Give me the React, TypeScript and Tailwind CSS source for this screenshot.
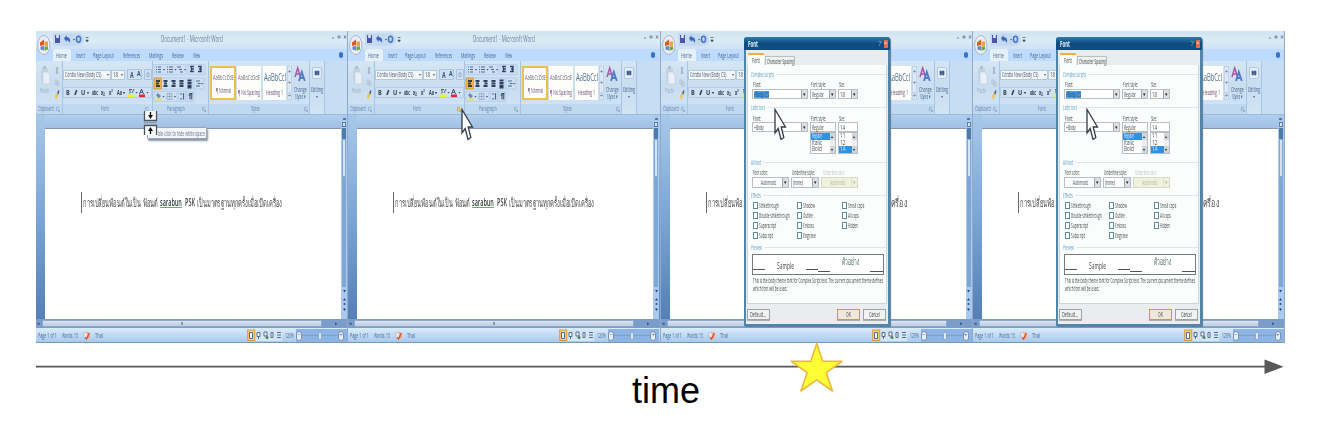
import { useLayoutEffect, useRef, useState, type ReactNode } from "react";

/* One line of text, condensed or widened to fill the width of its box. */
function Fit({ c, children }: { c: string; children: ReactNode }) {
  const box = useRef<HTMLSpanElement>(null);
  const ink = useRef<HTMLSpanElement>(null);
  const [k, setK] = useState(1);
  useLayoutEffect(() => {
    if (box.current && ink.current && ink.current.offsetWidth) {
      setK(box.current.clientWidth / ink.current.offsetWidth);
    }
  }, []);
  return (
    <span ref={box} className={`block shrink-0 whitespace-nowrap leading-none ${c}`}>
      <span ref={ink} className="inline-block origin-left" style={{ transform: `scaleX(${k})` }}>
        {children}
      </span>
    </span>
  );
}

/* Set on parts that lie wholly behind the open dialog. */
type Covered = { covered: boolean };

function TitleBar({ covered }: Covered) {
  return (
    <div className="flex h-[18px] bg-linear-to-b from-[#cfe3ef] via-[#dcebf6] to-[#cfe1f3] pl-[17px]">
      <div className="mt-[2px] h-[13px] w-[31px] rounded-r-full bg-[#c3daf0]">
        <svg width="40" height="13" viewBox="0 0 40 13">
          <rect x="2" y="2" width="5" height="8" fill="#4b55a8" />
          <rect x="3.2" y="2" width="2.6" height="3" fill="#dfe8f8" />
          <path d="M11 5.500 L13.500 2 V4 Q18 4 17 10 Q16 7 13.500 7.200 V9Z" fill="#3a68bd" />
          <path d="M20 6h2l-1 1.500z" fill="#456" />
          <ellipse cx="25.500" cy="6.300" rx="2" ry="3" fill="none" stroke="#4774c2" strokeWidth="1.500" />
          <path d="M32.500 4.500h3M32.800 7h2.500l-1.200 2z" stroke="#456" strokeWidth=".7" fill="#456" />
        </svg>
      </div>
      <div className="ml-[77px] mt-[4px] w-[62px]">
        {!covered && <Fit c="w-[62px] text-[8.5px] text-[#6b7f9c]">Document1 - Microsoft Word</Fit>}
      </div>
      <svg className="ml-[108px] mt-[3px]" width="16" height="7" viewBox="0 0 16 7">
        <path d="M1 4h2M7 2h2v2H7zM13 1.500l2 3M15 1.500l-2 3" stroke="#7289a8" fill="none" />
      </svg>
    </div>
  );
}

function Tabs({ covered }: Covered) {
  return (
    <div className="flex h-[12px] items-center bg-[#bddaff] pl-[17px] text-[7px] text-[#4b6690]">
      <div className="flex h-full w-[18px] items-center rounded-t-[2px] bg-[#e6f0fb] pl-[3px]">
        <Fit c="w-[11px]">Home</Fit>
      </div>
      <Fit c="ml-[5px] w-[9px]">Insert</Fit>
      <Fit c="ml-[8px] w-[21px]">Page Layout</Fit>
      <div className="flex w-[86px] shrink-0 items-center">
        {!covered && (
          <>
            <Fit c="ml-[9px] w-[17px]">References</Fit>
            <Fit c="ml-[9px] w-[14px]">Mailings</Fit>
            <Fit c="ml-[9px] w-[12px]">Review</Fit>
            <Fit c="ml-[9px] w-[7px]">View</Fit>
          </>
        )}
      </div>
      <span className="ml-[139px] h-[6px] w-[4px] shrink-0 rounded-full bg-[#3c72c8]" />
    </div>
  );
}

function OfficeButton() {
  return (
    <svg className="absolute left-[1px] top-[4px]" width="14" height="20" viewBox="0 0 14 20">
      <ellipse cx="6.800" cy="10" rx="6.200" ry="9.500" fill="#e9edf3" stroke="#98aac2" strokeWidth=".8" />
      <path d="M3 7.500 7 4.500v5.500l-4 1z" fill="#e0561f" />
      <path d="M7.500 6.500h3.500v4.500H7.500z" fill="#e9a13a" />
      <path d="M3.500 11.500l3.500-.6v4.500l-3.500-1z" fill="#5b8dd6" />
      <path d="M7.500 11.500H11v3l-3.500 1.200z" fill="#6ba53f" />
    </svg>
  );
}

const group = "flex h-[53px] shrink-0 flex-col border-r border-[#a9c4e2] bg-linear-to-b from-[#d5e5f3] via-[#c8ddf0] to-[#d1e5f6] pt-px";
const strip = "mt-auto flex h-[10px] items-center bg-[#c0d9f1] text-[6.5px] text-[#5f7fa8]";

function Launcher({ c, lit = false }: { c: string; lit?: boolean }) {
  return (
    <span className={`shrink-0 ${c} ${lit ? "bg-[#f5d667]" : ""}`}>
      <svg width="4" height="5" viewBox="0 0 4 5">
        <path d="M.5 4V.5H3M1.500 2l2 2.400M3.500 2.500v2h-2" stroke="#7d97b8" strokeWidth=".6" fill="none" />
      </svg>
    </span>
  );
}

function ClipboardGroup() {
  return (
    <div className={`${group} w-[27px]`}>
      <div className="flex">
        <div className="w-[16px] pl-[4px]">
          <svg className="mt-[4px]" width="12" height="20" viewBox="0 0 12 20">
            <rect x="1" y="2" width="7" height="14" rx="1" fill="#c6d3e2" />
            <rect x="3" y="0" width="3" height="3" fill="#b0bfd1" />
            <path d="M3 6h5l2 3v9H3z" fill="#e9eff7" stroke="#b5c3d6" strokeWidth=".5" />
          </svg>
          <Fit c="mt-px w-[9px] text-[7px] text-[#9cadc4]">Paste</Fit>
        </div>
        <svg width="9" height="40" viewBox="0 0 9 40">
          <path d="M4 5l2 7M6 5l-2 7" stroke="#95a7bf" strokeWidth=".8" />
          <path d="M3 18h2v4H3zM5 20h2v4H5z" fill="#dae4f0" stroke="#9fb0c6" strokeWidth=".6" />
          <path d="M3 34l2-3 1.500 1.500L4 38z" fill="#efc341" />
          <path d="M5 31l1.500-3 1 .8-1 4z" fill="#49659c" />
        </svg>
      </div>
      <div className={`${strip} pl-[2px]`}>
        <Fit c="w-[16px]">Clipboard</Fit>
        <Launcher c="ml-[2px]" />
      </div>
    </div>
  );
}

function FontGroup({ lit, covered }: { lit: boolean } & Covered) {
  return (
    <div className={`${group} w-[90px]`}>
      <div className="mt-[7px] flex h-[11px] items-center text-[7px] text-[#4c5768]">
        <div className="flex h-[10px] w-[48px] items-center border border-[#b3c9e3] bg-[#f2f7fc] pl-px">
          <Fit c="w-[36px]">Cordia New (Body CS)</Fit>
          <span className="ml-[6px] text-[4px]">▾</span>
        </div>
        <div className="flex h-[10px] w-[14px] items-center border border-[#b3c9e3] bg-[#f2f7fc] pl-px">
          <Fit c="w-[5px]">18</Fit>
          {!covered && <span className="ml-[3px] text-[4px]">▾</span>}
        </div>
        {!covered && (
          <div className="ml-[2px] flex h-[11px] w-[15px] items-center gap-[3px] rounded-[1px] border border-[#a9c3e2] bg-[#cfe0f3] pl-[2px] text-[#33507e]">
            <Fit c="w-[4px] text-[8px] font-bold">A</Fit>
            <Fit c="w-[4px] text-[6.5px] font-bold">A</Fit>
          </div>
        )}
        <svg className="ml-[2px] rounded-[1px] border border-[#a9c3e2] bg-[#cfe0f3]" width="8" height="11" viewBox="0 0 8 11">
          <path d="M2 7l2-4 2 2-2 4z" fill="#e7ecf5" stroke="#596f95" strokeWidth=".8" />
        </svg>
      </div>
      <div className="mt-[7px] flex h-[11px] items-center rounded-[1px] border border-[#b6cde6] bg-[#cfe1f3] text-[7px] font-bold text-[#32425e]">
        <Fit c="ml-[2px] w-[4px]">B</Fit>
        <Fit c="ml-[4px] w-[3px] italic">I</Fit>
        <Fit c="ml-[4px] w-[4px] underline">U</Fit>
        <span className="ml-[2px] w-[3px] text-[4px]">▾</span>
        <Fit c="ml-[3px] w-[6px] line-through">abc</Fit>
        <Fit c="ml-[3px] w-[4px]">x₂</Fit>
        <Fit c="ml-[4px] w-[4px]">x²</Fit>
        {!covered && (
          <>
            <Fit c="ml-[4px] w-[5px]">Aa</Fit>
            <span className="ml-px w-[3px] text-[4px]">▾</span>
          </>
        )}
        <svg className="ml-[2px] shrink-0" width="24" height="10" viewBox="0 0 24 10">
          <path d="M2 1.500h3M3 1.500v4M5 5l2-4" stroke="#53627e" strokeWidth="1" />
          <rect x="1" y="6.500" width="6" height="2.600" fill="#f5ee1f" />
          <path d="M8.500 4h2l-1 1.400zM19.500 4h2l-1 1.400z" fill="#32425e" />
          <path d="M12.500 6l2-5 2 5M13.200 4.300h2.600" stroke="#3c5088" strokeWidth="1" fill="none" />
          <rect x="12" y="6.500" width="6" height="2.600" fill="#e3262b" />
        </svg>
      </div>
      <div className={strip}>
        <Fit c="ml-[38px] w-[8px]">Font</Fit>
        <Launcher c="ml-[36px]" lit={lit} />
      </div>
    </div>
  );
}

function ParagraphGroup({ covered }: Covered) {
  return (
    <div className={`${group} w-[56px]`}>
      <svg width="54" height="41" viewBox="0 0 54 41" fill="none">
        <g fill="#cddff3" stroke="#a9c3e2" strokeWidth=".6">
          <rect x="1" y="2.500" width="32" height="10" />
          <rect x="35" y="2.500" width="17" height="10" />
          <rect x="1" y="16" width="38" height="11" />
          <rect x="41" y="16" width="10" height="11" />
          <rect x="1" y="29.500" width="23" height="10" />
          <rect x="25.500" y="29.500" width="7" height="10" />
          <rect x="34" y="29.500" width="7" height="10" />
        </g>
        <path d="M3 5h1m1 0h3M3 7.500h1m1 0h3M3 10h1m1 0h3M14 5h1m1 0h4M14 7.500h1m1 0h4M14 10h1m1 0h4M24 5h4M26 7.500h3M27 10h3" stroke="#4f678f" />
        <path d="M10 7h2l-1 1.500zM21.500 7h2l-1 1.500zM31 7h2l-1 1.500zM48 21h2l-1 1.500zM9.500 34h2l-1 1.500zM21 34h2l-1 1.500z" fill="#33466b" />
        <path d="M37 4.500h4M38 7h3M37 9.500h4M38.500 5v5M45 4.500h4M46 7h3M45 9.500h4M47.500 5v5" stroke="#31476f" strokeWidth="1.300" />
        <rect x="1" y="16" width="7.500" height="11" fill="#f6b04e" stroke="#d08a2c" strokeWidth=".6" />
        <path d="M3 19h4M3 21.500h3M3 24h4M10.500 19h4M11 21.500h3M10.500 24h4M18.500 19h4M19.500 21.500h3M18.500 24h4M26.500 19h4M26.500 21.500h4M26.500 24h4M34.500 18.500h4M34.500 21h4M34.500 23.500h4M34.500 25.500h4" stroke="#2e3f60" strokeWidth="1.800" />
        <path d="M43 19h4M44.500 21.500h3M43 24h4" stroke="#47669c" />
        <path d="M3 33l2-2 3 3-2.500 2.500z" fill="#6f89b4" />
        <path d="M2.500 37.500h6" stroke="#f0dd47" strokeWidth="1.800" />
        <path d="M14 31.500h5v6h-5zM14 34.500h5M16.500 31.500v6" stroke="#8397b8" strokeWidth=".6" />
        <path d="M27 32h2M27 37h2M30.500 31v6.500" stroke="#46639b" strokeWidth="1.200" />
        <path d="M37 37.500V31.500M38.800 37.500V31.500M35.500 33h2M36.500 31.500h3" stroke="#31405f" strokeWidth="1" />
      </svg>
      <div className={strip}>
        {!covered && <Fit c="ml-[14px] w-[18px]">Paragraph</Fit>}
        <Launcher c="ml-[17px]" />
      </div>
    </div>
  );
}

function StyleCell({ sample, name, c, s, n }: { sample: string; name: string; c: string; s: string; n: string }) {
  return (
    <div className={`flex h-[34px] shrink-0 flex-col items-center bg-[#fdfdfc] ${c}`}>
      {sample && <Fit c={s}>{sample}</Fit>}
      {name && <Fit c={`mt-auto mb-[4px] text-[7px] text-[#6b4d72] ${n}`}>{name}</Fit>}
    </div>
  );
}

function StylesGroup({ covered }: Covered) {
  return (
    <div className={`${group} w-[101px]`}>
      <div className="flex pl-px pt-[4px]">
        <StyleCell c="w-[26px] border-2 border-[#eebd55]" s="mt-[6px] w-[21px] text-[7.5px] text-[#6d7073]" n="w-[15px]" sample={covered ? "" : "AaBbCcDdE"} name={covered ? "" : "¶ Normal"} />
        <StyleCell c="ml-px w-[24px]" s="mt-[8px] w-[22px] text-[7.5px] text-[#6d7073]" n="w-[22px]" sample={covered ? "" : "AaBbCcDdE"} name={covered ? "" : "¶ No Spacing"} />
        <StyleCell c="ml-[2px] w-[23px]" s="mt-[6px] w-[22px] text-[10px] text-[#54718f]" n="w-[17px]" sample="AaBbCcI" name="Heading 1" />
        <svg className="ml-px" width="5" height="34" viewBox="0 0 5 34">
          <rect x=".3" y=".3" width="4.400" height="33" fill="#dce8f5" stroke="#b2c8e1" strokeWidth=".6" />
          <path d="M1.500 6h2L2.500 4.500zM1.500 16h2l-1 1.500zM1.500 27h2M1.500 29h2l-1 1.500z" fill="#687fa3" stroke="#687fa3" strokeWidth=".5" />
        </svg>
        <div className="ml-[2px] text-[7px] text-[#4d6893]">
          <svg width="13" height="18" viewBox="0 0 13 18" fill="none">
            <path d="M1 11L3.700 2l2.800 9M2 8h3.500" stroke="#a958a6" strokeWidth="1.500" />
            <path d="M5 15L7.800 6l3 9M6 12h4" stroke="#4d7bc5" strokeWidth="1.800" />
          </svg>
          <Fit c="mt-[2px] w-[13px]">Change</Fit>
          <Fit c="ml-px w-[11px]">Styles ▾</Fit>
        </div>
      </div>
      <div className={strip}>
        <div className="ml-[42px] w-[9px]">{!covered && <Fit c="w-[9px]">Styles</Fit>}</div>
        <Launcher c="ml-[44px]" />
      </div>
    </div>
  );
}

function EditingGroup() {
  return (
    <div className={`${group} w-[15px] items-center text-[7px] text-[#4d6893]`}>
      <div className="mt-[5px] h-[12px] w-[10px] rounded-[1px] border border-[#b1c9e4] bg-[#e4eefa]">
        <svg width="8" height="10" viewBox="0 0 8 10">
          <path d="M2 3h1.500v4H2zM4.500 3H6v4H4.500zM3 4.500h2" fill="#39588f" stroke="#39588f" strokeWidth=".6" />
        </svg>
      </div>
      <Fit c="mt-[7px] w-[12px]">Editing</Fit>
      <span className="text-[4px] leading-[8px]">▾</span>
    </div>
  );
}

function DocumentLine({ covered }: Covered) {
  return (
    <div className="flex h-[20px] items-center text-[11px] text-[#4c4c4c]">
      {covered ? (
        <>
          <Fit c="ml-px w-[35px]">การเปลี่ยนฟ้อ</Fit>
          <Fit c="ml-[148px] w-[16px]">ครื่อง</Fit>
        </>
      ) : (
        <>
          <Fit c="ml-px w-[75px]">การเปลี่ยนฟ้อนต์ในเป็น ฟ้อนต์</Fit>
          <span className="ml-[2px] border-b border-[#62b35f]">
            <Fit c="w-[22px] text-[10px] font-semibold text-[#2e3b35]">sarabun</Fit>
          </span>
          <Fit c="ml-[3px] w-[10px] text-[10px] font-semibold text-[#444]">PSK</Fit>
          <Fit c="ml-[2px] w-[85px]">เป็นมาตรฐานทุกครั้งเมื่อเปิดเครื่อง</Fit>
        </>
      )}
    </div>
  );
}

function PageArea({ covered }: Covered) {
  return (
    <div className="flex h-[204px] bg-linear-to-b from-[#b4d1ee] via-[#6e9bcf] to-[#5b88c0]">
      <div className="w-[9px] shrink-0 bg-linear-to-b from-[#a8c8e9] via-[#7ba5d4] to-[#567fb5]" />
      <div className="flex w-[296px] flex-col">
        <div className="h-[14px] border-b border-[#8496b0] bg-linear-to-b from-[#b1cfee] to-[#a0bfe3]" />
        <div className="flex h-[190px] bg-white pl-[36px] pt-[63px]">
          <span className="h-[21px] w-px bg-[#666]" />
          <DocumentLine covered={covered} />
        </div>
      </div>
      <div className="flex w-[6px] flex-col items-center bg-[#a9c9ee]">
        <span className="mt-[3px] h-[2px] w-[3px] bg-[#58779e]" />
        <span className="mt-[2px] h-[5px] w-[4px] border border-[#5c7ba2] bg-[#dbe7f5]" />
        <span className="mt-px h-[11px] w-[4px] bg-[#4d7cab]" />
        <span className="h-[38px] w-[4px] rounded-[1px] border border-[#87a8cd] bg-[#d5e4f4]" />
        <span className="h-[110px] w-[4px] bg-[#7fa7d5]" />
        <svg width="5" height="32" viewBox="0 0 5 32">
          <path d="M1 3h3L2.500 5.500zM1 13.500L2.500 11 4 13.500zM1 21.500h3L2.500 24z" fill="#254a82" />
          <circle cx="2.500" cy="17" r="1" fill="#254a82" />
        </svg>
      </div>
    </div>
  );
}

function StatusBar() {
  return (
    <>
      <div className="flex h-[9px] items-center bg-[#7a9dca] pl-px">
        <span className="w-[5px] text-[5px] leading-none text-[#2c4c7e]">◂</span>
        <div className="flex h-[7px] w-[280px] items-center justify-center rounded-[1px] border border-[#91a9c8] bg-linear-to-b from-[#dce4ef] to-[#bccde4]">
          <span className="h-[3px] w-[2px] bg-[#8196b5]" />
        </div>
        <span className="ml-[13px] text-[5px] leading-none text-[#2c4c7e]">▸</span>
      </div>
      <div className="flex h-[15px] items-center bg-linear-to-b from-[#dcebfb] via-[#bfd9f4] to-[#a6c7ea] pl-[2px] text-[7px] text-[#4b6790] shadow-[inset_0_-1px_0_#7599bd]">
        <Fit c="w-[19px]">Page 1 of 1</Fit>
        <Fit c="ml-[5px] w-[16px]">Words: 15</Fit>
        <svg className="ml-[5px]" width="8" height="11" viewBox="0 0 8 11">
          <path d="M1 3l3-1v7l-3-1z" fill="#f4f0ec" stroke="#9a98a5" strokeWidth=".5" />
          <path d="M4 2l3 1v5L4 9z" fill="#f3aa83" />
          <path d="M2 7l1.500 2L6.500 3" stroke="#d64a36" strokeWidth="1.200" fill="none" />
        </svg>
        <Fit c="ml-[4px] w-[8px]">Thai</Fit>
        <svg className="ml-[144px] shrink-0" width="36" height="13" viewBox="0 0 36 13" fill="none">
          <rect x="0" y="1" width="35" height="11" fill="#d6e5f4" />
          <rect x=".7" y="1" width="7" height="10.500" fill="#f6cf7d" stroke="#d7993c" />
          <path d="M2.500 3.500h3v6h-3zM10 3.500h3v4h-3zM11.500 8v2M17 3h3v4h-3zM24 3.500h2v5h-2zM30 3.500h4M30 6h4M30 8.500h4" stroke="#516b90" fill="#f7fafd" />
          <circle cx="20" cy="8.500" r="1.500" fill="#3f8c55" />
        </svg>
        <Fit c="ml-[2px] w-[9px]">120%</Fit>
        <div className="ml-[2px] flex h-[13px] w-[51px] items-center bg-[#8db4e2]">
          <span className="h-[10px] w-[6px] shrink-0 rounded-full border border-[#7592b7] bg-[#e6eff8] text-center text-[6px] leading-[7px]">−</span>
          <span className="h-px w-[16px] bg-[#7d9fca]" />
          <span className="h-[8px] w-[4px] rounded-[1px] border border-[#8aa6ca] bg-[#dce9f5]" />
          <span className="h-px w-[16px] bg-[#7d9fca]" />
          <span className="h-[10px] w-[6px] shrink-0 rounded-full border border-[#7592b7] bg-[#e6eff8] text-center text-[6px] leading-[7px]">+</span>
        </div>
      </div>
    </>
  );
}

function Pointer() {
  return (
    <svg className="absolute left-[113px] top-[77px]" width="14" height="35" viewBox="0 0 14 35">
      <path d="M1 1.500V25L4.200 20.500 7 31.500 9.800 29.500 7.200 19h4.300z" fill="#fff" stroke="#333c46" strokeWidth="1.300" />
    </svg>
  );
}

function SplitPointer() {
  return (
    <>
      <div className="absolute left-[111px] top-[96px] flex h-[12px] w-[60px] items-center rounded-[1px] border border-[#9ba5b3] bg-[#f3f5f9] pl-[10px] shadow-[1px_2px_2px_#8894a4]">
        <Fit c="w-[47px] text-[7px] text-[#6e7682]">ble-click to hide white space</Fit>
      </div>
      <svg className="absolute left-[107px] top-[79px]" width="15" height="26" viewBox="0 0 15 26">
        <path d="M1 1h13v10H1zM1 15h13v10H1z" fill="#fff" />
        <path d="M1.500 1v9.500h12V1M1.500 25v-9.500h12V25" fill="none" stroke="#4b535d" strokeWidth="1.300" />
        <path d="M1 12.700h13" stroke="#8b939c" />
        <path d="M7.500 2v4M7.500 24v-4" stroke="#111" strokeWidth="1.400" />
        <path d="M5 5h5L7.500 9zM5 21h5l-2.500-4z" fill="#111" />
      </svg>
    </>
  );
}

function Heading({ c, w, children }: { c: string; w: string; children: string }) {
  return (
    <div className={`flex h-[8px] items-center pl-[3px] ${c}`}>
      <Fit c={`text-[7px] text-[#5aa3cf] ${w}`}>{children}</Fit>
      <span className="ml-[2px] h-px flex-1 bg-[#dfe7ec]" />
    </div>
  );
}

function Combo({ c, t, value, picked = false, off = false }: { c: string; t: string; value: string; picked?: boolean; off?: boolean }) {
  return (
    <div className={`flex shrink-0 items-center border pl-px ${off ? "border-[#d8dac5] bg-[#f0f1df] text-[#b5b7a5]" : "border-[#b9bec4] bg-white text-[#43484d]"} ${c}`}>
      <span className={picked ? "bg-[#4a9ad6]" : ""}>
        <Fit c={t}>{value}</Fit>
      </span>
      <span className={`ml-auto flex h-full w-[6px] items-center justify-center border-l text-[5px] leading-none ${off ? "border-[#dcdecb]" : "border-[#a0a5ab] bg-[#dcdfe2] text-[#222]"}`}>▾</span>
    </div>
  );
}

function ListBox({ c, rows, w, at }: { c: string; rows: string[]; w: string; at: number }) {
  return (
    <div className={`flex h-[22px] border border-[#b9bec4] bg-white ${c}`}>
      <div className="flex flex-1 flex-col">
        {rows.map((r, i) => (
          <div key={r} className={`flex h-[6.700px] items-center pl-px ${i === at ? "bg-[#2f93e0] text-[#d8ecff]" : "text-[#43484d]"}`}>
            <Fit c={`text-[6.5px] ${w}`}>{r}</Fit>
          </div>
        ))}
      </div>
      <div className="flex w-[5px] flex-col justify-between bg-[#eceeef] text-center text-[4px] leading-[7px] text-[#222]">
        <span className="bg-[#d1d5d9]">▴</span>
        <span className="bg-[#d1d5d9]">▾</span>
      </div>
    </div>
  );
}

const effects: [string, string, string, string, string, string][] = [
  ["Strikethrough", "w-[20px]", "Shadow", "w-[12px]", "Small caps", "w-[16px]"],
  ["Double strikethrough", "w-[31px]", "Outline", "w-[10px]", "All caps", "w-[11px]"],
  ["Superscript", "w-[17px]", "Emboss", "w-[11px]", "Hidden", "w-[10px]"],
  ["Subscript", "w-[14px]", "Engrave", "w-[13px]", "", ""],
];

function Check({ label, w }: { label: string; w: string }) {
  return (
    <div className="flex w-[44.700px] shrink-0 items-center">
      {label && (
        <>
          <span className="mr-px h-[7px] w-[5px] border border-[#5f8ba3] bg-white" />
          <Fit c={w}>{label}</Fit>
        </>
      )}
    </div>
  );
}

const button = "flex h-[11px] w-[23px] items-center justify-center border shadow-[0_1px_0_#a9adb0]";

function FontDialog() {
  return (
    <div className="absolute left-[83px] top-[6px] flex h-[289px] w-[146px] flex-col rounded-t-[3px] border-x-2 border-b-2 border-[#4f86a8] bg-[#ebecee] text-[7px] text-[#43484d] shadow-[1px_1px_1px_#607b99]">
      <div className="-mx-[2px] flex h-[13px] items-center rounded-t-[3px] bg-linear-to-b from-[#2e7cae] via-[#0d4c82] to-[#104d80] pl-[4px]">
        <Fit c="w-[10px] text-[8px] font-bold text-[#e6eff6]">Font</Fit>
        <span className="ml-auto text-[7px] leading-none text-[#9cc1dd]">?</span>
        <span className="ml-[2px] mr-[2px] h-[8px] w-[4px] bg-[#e4694f] text-center text-[6px] leading-[7px] text-white">×</span>
      </div>
      <div className="mt-[3px] flex h-[12px] items-end pl-[2px]">
        <div className="flex h-[12px] w-[16px] items-center border-t-2 border-[#eeb040] bg-[#fcfdfd] pl-[4px]">
          <Fit c="w-[8px]">Font</Fit>
        </div>
        <div className="ml-px flex h-[9px] w-[30px] items-center border border-b-0 border-[#b9c0c5] bg-[#f1f2f0] pl-px">
          <Fit c="w-[27px]">Character Spacing</Fit>
        </div>
      </div>
      <div className="mx-px flex h-[239px] flex-col border border-t-0 border-[#cfd4d8] bg-[#fbfcfc]">
        <Heading c="mt-[5px]" w="w-[23px]">Complex scripts</Heading>
        <div className="mt-[2px] flex h-[8px] items-center pl-[5px]">
          <Fit c="w-[8px]">Font:</Fit>
          <Fit c="ml-[50px] w-[15px]">Font style:</Fit>
          <Fit c="ml-[13px] w-[6px]">Size:</Fit>
        </div>
        <div className="mt-px flex h-[10px] pl-[4px]">
          <Combo c="h-[10px] w-[56px]" t="w-[15px] text-[#1d4f86]" value="+Body CS" picked />
          <Combo c="ml-[2px] h-[10px] w-[26px]" t="w-[12px]" value="Regular" />
          <Combo c="ml-[2px] h-[10px] w-[20px]" t="w-[5px]" value="18" />
        </div>
        <Heading c="mt-[4px]" w="w-[14px]">Latin text</Heading>
        <div className="mt-[3px] flex h-[8px] items-center pl-[5px]">
          <Fit c="w-[8px]">Font:</Fit>
          <Fit c="ml-[50px] w-[15px]">Font style:</Fit>
          <Fit c="ml-[13px] w-[6px]">Size:</Fit>
        </div>
        <div className="flex h-[10px] pl-[4px]">
          <Combo c="h-[10px] w-[56px]" t="w-[10px]" value="+Body" />
          <div className="ml-[2px] flex h-[10px] w-[26px] items-center border border-[#b9bec4] bg-white pl-px">
            <Fit c="w-[12px]">Regular</Fit>
          </div>
          <div className="ml-[2px] flex h-[10px] w-[20px] items-center border border-[#b9bec4] bg-white pl-px">
            <Fit c="w-[5px]">14</Fit>
          </div>
        </div>
        <div className="flex h-[22px] pl-[62px]">
          <ListBox c="w-[26px]" w="w-[10px]" rows={["Regular", "Italic", "Bold"]} at={0} />
          <ListBox c="ml-[2px] w-[20px]" w="w-[5px]" rows={["11", "12", "14"]} at={2} />
        </div>
        <Heading c="mt-[4px]" w="w-[10px]">All text</Heading>
        <div className="mt-[2px] flex h-[8px] items-center pl-[5px]">
          <Fit c="w-[15px]">Font color:</Fit>
          <Fit c="ml-[24px] w-[23px]">Underline style:</Fit>
          <Fit c="ml-[8px] w-[22px] text-[#c6c8c4]">Underline color:</Fit>
        </div>
        <div className="mt-px flex h-[11px] pl-[4px]">
          <Combo c="h-[11px] w-[37px]" t="ml-[7px] w-[15px]" value="Automatic" />
          <Combo c="ml-[2px] h-[11px] w-[28px]" t="w-[10px]" value="(none)" />
          <Combo c="ml-[2px] h-[11px] w-[37px]" t="ml-[7px] w-[15px]" value="Automatic" off />
        </div>
        <Heading c="mt-[3px]" w="w-[10px]">Effects</Heading>
        <div className="mt-[2px] h-[40px] pl-[5px]">
          {effects.map(([a, aw, b, bw, d, dw]) => (
            <div key={a} className="flex h-[9.800px] items-center">
              <Check label={a} w={aw} />
              <Check label={b} w={bw} />
              <Check label={d} w={dw} />
            </div>
          ))}
        </div>
        <Heading c="mt-[2px]" w="w-[11px]">Preview</Heading>
        <div className="ml-[4px] mt-[3px] flex h-[21px] w-[132px] border border-[#74797e] bg-white">
          <span className="mt-[14px] h-px w-[12px] bg-[#555]" />
          <Fit c="ml-[12px] mt-[6px] w-[17px] text-[9.5px]">Sample</Fit>
          <span className="ml-[12px] mt-[14px] h-px w-[12px] bg-[#555]" />
          <span className="mt-[16px] h-px w-[12px] bg-[#555]" />
          <Fit c="ml-[12px] mt-px w-[17px] text-[10px] text-[#4b6862]">ตัวอย่าง</Fit>
          <span className="ml-[11px] mt-[16px] h-px w-[13px] bg-[#555]" />
        </div>
        <Fit c="ml-[5px] mt-[2px] w-[130px]">This is the body theme font for Complex Script text. The current document theme defines</Fit>
        <Fit c="ml-[5px] mt-px w-[34px]">which font will be used.</Fit>
      </div>
      <div className="mt-[5px] flex px-px">
        <div className={`${button} border-[#9da3a8] bg-[#f2f3f1]`}>
          <Fit c="w-[16px]">Default...</Fit>
        </div>
        <div className={`${button} ml-[67px] border-[#c89b49] bg-[#ece9dc]`}>
          <Fit c="w-[5px]">OK</Fit>
        </div>
        <div className={`${button} ml-[3px] border-[#9da3a8] bg-[#f2f3f1]`}>
          <Fit c="w-[11px]">Cancel</Fit>
        </div>
      </div>
    </div>
  );
}

function WordFrame({ stage }: { stage: "margin" | "launcher" | "dialog" }) {
  const covered = stage === "dialog";
  return (
    <div className="relative h-[312px] w-[312.250px] shrink-0 overflow-hidden border-r border-[#8fa9c7] bg-[#b9d4f0] blur-[0.4px]">
      <TitleBar covered={covered} />
      <Tabs covered={covered} />
      <div className="flex h-[54px] border-b border-[#9dbad9] bg-[#c6ddf4]">
        <ClipboardGroup />
        <FontGroup lit={stage === "launcher"} covered={covered} />
        <ParagraphGroup covered={covered} />
        <StylesGroup covered={covered} />
        <EditingGroup />
      </div>
      <PageArea covered={covered} />
      <StatusBar />
      <OfficeButton />
      {stage === "margin" && <SplitPointer />}
      {covered && <FontDialog />}
      {stage !== "margin" && <Pointer />}
    </div>
  );
}

export default function App() {
  return (
    <main className="h-[440px] w-[1318px] overflow-hidden bg-white pt-[31px] font-['Open_Sans','Noto_Sans',sans-serif]">
      <div className="ml-[36px] flex w-[1249px]">
        <WordFrame stage="margin" />
        <WordFrame stage="launcher" />
        <WordFrame stage="dialog" />
        <WordFrame stage="dialog" />
      </div>
      <svg className="relative -mt-[3px] block" width="1318" height="54" viewBox="0 340 1318 54">
        <path d="M36 366.700H1266" stroke="#595959" strokeWidth="1.800" />
        <path d="M1264.500 359.500L1283.500 366.700 1264.500 374z" fill="#595959" />
        <path d="M816.700 343.500L822.700 361.300H842L826.300 372.700 832.500 391 816.700 379.800 800.900 391 807.100 372.700 791.400 361.300H810.700z" fill="#ffff35" stroke="#efb440" strokeWidth="1.600" strokeLinejoin="round" />
      </svg>
      <p className="-mt-[23px] ml-[632px] font-['Liberation_Sans',Arial,sans-serif] text-[36px] leading-[40px] text-black">time</p>
    </main>
  );
}
